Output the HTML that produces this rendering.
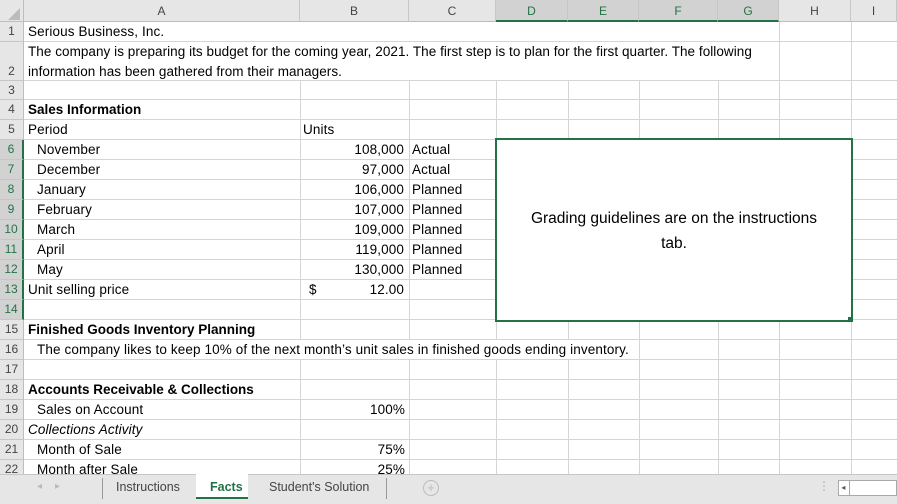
<!DOCTYPE html>
<html><head><style>
*{margin:0;padding:0;box-sizing:border-box}
body{width:897px;height:504px;overflow:hidden;background:#fff;font-family:"Liberation Sans",sans-serif;font-size:13.5px;letter-spacing:0.12px;color:#000;position:relative}
.a{position:absolute}
.h{background:#d4d4d4}
.ch{position:absolute;top:0;height:22px;line-height:22px;text-align:center;color:#444;font-size:12px;letter-spacing:0;border-right:1px solid #c6c6c6;background:#e6e6e6;border-bottom:1px solid #bdbdbd}
.ch.s{background:#d2d2d2;color:#217346;border-bottom:2px solid #217346}
.rh{position:absolute;left:0;width:24px;text-align:center;color:#444;font-size:12px;letter-spacing:0;background:#e6e6e6;border-bottom:1px solid #c6c6c6;border-right:1px solid #bdbdbd}
.rh.s{background:#d2d2d2;color:#217346;border-right:2px solid #217346}
.t{position:absolute;height:19px;line-height:19px;white-space:nowrap;background:#fff}
.r{text-align:right}
</style></head><body>
<div class="a" style="left:0;top:0;width:24px;height:22px;background:#e6e6e6;border-right:1px solid #bdbdbd;border-bottom:1px solid #bdbdbd"></div>
<div class="a" style="left:8px;top:8px;width:0;height:0;border-left:12px solid transparent;border-bottom:12px solid #bcbcbc"></div>
<div class="ch" style="left:24px;width:276px">A</div>
<div class="ch" style="left:300px;width:109px">B</div>
<div class="ch" style="left:409px;width:87px">C</div>
<div class="ch s" style="left:496px;width:72px">D</div>
<div class="ch s" style="left:568px;width:71px">E</div>
<div class="ch s" style="left:639px;width:79px">F</div>
<div class="ch s" style="left:718px;width:61px">G</div>
<div class="ch" style="left:779px;width:72px">H</div>
<div class="ch" style="left:851px;width:46px">I</div>

<div class="a h" style="left:300px;top:22px;width:1px;height:452px"></div>
<div class="a h" style="left:409px;top:22px;width:1px;height:452px"></div>
<div class="a h" style="left:496px;top:22px;width:1px;height:452px"></div>
<div class="a h" style="left:568px;top:22px;width:1px;height:452px"></div>
<div class="a h" style="left:639px;top:22px;width:1px;height:452px"></div>
<div class="a h" style="left:718px;top:22px;width:1px;height:452px"></div>
<div class="a h" style="left:779px;top:22px;width:1px;height:452px"></div>
<div class="a h" style="left:851px;top:22px;width:1px;height:452px"></div>
<div class="a h" style="left:24px;top:41px;width:873px;height:1px"></div>
<div class="a h" style="left:24px;top:80px;width:873px;height:1px"></div>
<div class="a h" style="left:24px;top:99px;width:873px;height:1px"></div>
<div class="a h" style="left:24px;top:119px;width:873px;height:1px"></div>
<div class="a h" style="left:24px;top:139px;width:873px;height:1px"></div>
<div class="a h" style="left:24px;top:159px;width:873px;height:1px"></div>
<div class="a h" style="left:24px;top:179px;width:873px;height:1px"></div>
<div class="a h" style="left:24px;top:199px;width:873px;height:1px"></div>
<div class="a h" style="left:24px;top:219px;width:873px;height:1px"></div>
<div class="a h" style="left:24px;top:239px;width:873px;height:1px"></div>
<div class="a h" style="left:24px;top:259px;width:873px;height:1px"></div>
<div class="a h" style="left:24px;top:279px;width:873px;height:1px"></div>
<div class="a h" style="left:24px;top:299px;width:873px;height:1px"></div>
<div class="a h" style="left:24px;top:319px;width:873px;height:1px"></div>
<div class="a h" style="left:24px;top:339px;width:873px;height:1px"></div>
<div class="a h" style="left:24px;top:359px;width:873px;height:1px"></div>
<div class="a h" style="left:24px;top:379px;width:873px;height:1px"></div>
<div class="a h" style="left:24px;top:399px;width:873px;height:1px"></div>
<div class="a h" style="left:24px;top:419px;width:873px;height:1px"></div>
<div class="a h" style="left:24px;top:439px;width:873px;height:1px"></div>
<div class="a h" style="left:24px;top:459px;width:873px;height:1px"></div>

<div class="rh" style="top:22px;height:20px;line-height:19px">1</div>
<div class="rh" style="top:42px;height:39px;line-height:58px">2</div>
<div class="rh" style="top:81px;height:19px;line-height:18px">3</div>
<div class="rh" style="top:100px;height:20px;line-height:19px">4</div>
<div class="rh" style="top:120px;height:20px;line-height:19px">5</div>
<div class="rh s" style="top:140px;height:20px;line-height:19px">6</div>
<div class="rh s" style="top:160px;height:20px;line-height:19px">7</div>
<div class="rh s" style="top:180px;height:20px;line-height:19px">8</div>
<div class="rh s" style="top:200px;height:20px;line-height:19px">9</div>
<div class="rh s" style="top:220px;height:20px;line-height:19px">10</div>
<div class="rh s" style="top:240px;height:20px;line-height:19px">11</div>
<div class="rh s" style="top:260px;height:20px;line-height:19px">12</div>
<div class="rh s" style="top:280px;height:20px;line-height:19px">13</div>
<div class="rh s" style="top:300px;height:20px;line-height:19px">14</div>
<div class="rh" style="top:320px;height:20px;line-height:19px">15</div>
<div class="rh" style="top:340px;height:20px;line-height:19px">16</div>
<div class="rh" style="top:360px;height:20px;line-height:19px">17</div>
<div class="rh" style="top:380px;height:20px;line-height:19px">18</div>
<div class="rh" style="top:400px;height:20px;line-height:19px">19</div>
<div class="rh" style="top:420px;height:20px;line-height:19px">20</div>
<div class="rh" style="top:440px;height:20px;line-height:19px">21</div>
<div class="rh" style="top:460px;height:20px;line-height:19px">22</div>

<div class="t" style="left:25px;top:22px;width:754px;padding-left:3px">Serious Business, Inc.</div>
<div class="t" style="left:25px;top:42px;width:754px;height:38px;padding-left:3px;line-height:20px;letter-spacing:0.05px">The company is preparing its budget for the coming year, 2021. The first step is to plan for the first quarter. The following<br>information has been gathered from their managers.</div>
<div class="t" style="left:25px;top:100px;width:275px;padding-left:3px;font-weight:bold;letter-spacing:0">Sales Information</div>
<div class="t" style="left:25px;top:120px;padding-left:3px">Period</div>
<div class="t" style="left:301px;top:120px;padding-left:2px">Units</div>
<div class="t" style="left:25px;top:140px;padding-left:12px">November</div>
<div class="t" style="left:25px;top:160px;padding-left:12px">December</div>
<div class="t" style="left:25px;top:180px;padding-left:12px">January</div>
<div class="t" style="left:25px;top:200px;padding-left:12px">February</div>
<div class="t" style="left:25px;top:220px;padding-left:12px">March</div>
<div class="t" style="left:25px;top:240px;padding-left:12px">April</div>
<div class="t" style="left:25px;top:260px;padding-left:12px">May</div>
<div class="t" style="left:25px;top:280px;padding-left:3px">Unit selling price</div>
<div class="t r" style="left:301px;top:140px;width:107px;padding-right:4px">108,000</div>
<div class="t r" style="left:301px;top:160px;width:107px;padding-right:4px">97,000</div>
<div class="t r" style="left:301px;top:180px;width:107px;padding-right:4px">106,000</div>
<div class="t r" style="left:301px;top:200px;width:107px;padding-right:4px">107,000</div>
<div class="t r" style="left:301px;top:220px;width:107px;padding-right:4px">109,000</div>
<div class="t r" style="left:301px;top:240px;width:107px;padding-right:4px">119,000</div>
<div class="t r" style="left:301px;top:260px;width:107px;padding-right:4px">130,000</div>
<div class="t" style="left:309px;top:280px">$</div>
<div class="t r" style="left:330px;top:280px;width:78px;padding-right:4px">12.00</div>
<div class="t" style="left:410px;top:140px;padding-left:2px">Actual</div>
<div class="t" style="left:410px;top:160px;padding-left:2px">Actual</div>
<div class="t" style="left:410px;top:180px;padding-left:2px">Planned</div>
<div class="t" style="left:410px;top:200px;padding-left:2px">Planned</div>
<div class="t" style="left:410px;top:220px;padding-left:2px">Planned</div>
<div class="t" style="left:410px;top:240px;padding-left:2px">Planned</div>
<div class="t" style="left:410px;top:260px;padding-left:2px">Planned</div>
<div class="t" style="left:25px;top:320px;padding-left:3px;font-weight:bold;letter-spacing:0">Finished Goods Inventory Planning</div>
<div class="t" style="left:25px;top:340px;width:614px;padding-left:12px">The company likes to keep 10% of the next month’s unit sales in finished goods ending inventory.</div>
<div class="t" style="left:25px;top:380px;padding-left:3px;font-weight:bold;letter-spacing:0">Accounts Receivable &amp; Collections</div>
<div class="t" style="left:25px;top:400px;padding-left:12px">Sales on Account</div>
<div class="t r" style="left:301px;top:400px;width:107px;padding-right:3px">100%</div>
<div class="t" style="left:25px;top:420px;padding-left:3px;font-style:italic">Collections Activity</div>
<div class="t" style="left:25px;top:440px;padding-left:12px">Month of Sale</div>
<div class="t r" style="left:301px;top:440px;width:107px;padding-right:3px">75%</div>
<div class="t" style="left:25px;top:460px;padding-left:12px">Month after Sale</div>
<div class="t r" style="left:301px;top:460px;width:107px;padding-right:3px">25%</div>

<div class="a" style="left:495px;top:138px;width:358px;height:184px;border:2px solid #217346;background:#fff;text-align:center;font-size:15.5px;letter-spacing:0;line-height:25px;padding-top:66px">Grading guidelines are on the instructions<br>tab.</div>
<div class="a" style="left:848px;top:317px;width:5px;height:5px;background:#217346"></div>

<div class="a" style="left:0;top:474px;width:897px;height:30px;background:#e6e6e6;border-top:1px solid #c6c6c6"></div>
<div class="a" style="left:37px;top:481px;color:#bbb;font-size:10px">◂</div>
<div class="a" style="left:55px;top:481px;color:#bbb;font-size:10px">▸</div>
<div class="a" style="left:102px;top:478px;width:1px;height:21px;background:#999"></div>
<div class="a" style="left:116px;top:480px;color:#444;font-size:12.5px;letter-spacing:0">Instructions</div>
<div class="a" style="left:196px;top:474px;width:52px;height:25px;background:#fff;border-bottom:2px solid #217346"></div>
<div class="a" style="left:210px;top:480px;color:#217346;font-weight:bold;font-size:12.5px;letter-spacing:0">Facts</div>
<div class="a" style="left:269px;top:480px;color:#444;font-size:12.5px;letter-spacing:0">Student's Solution</div>
<div class="a" style="left:386px;top:478px;width:1px;height:21px;background:#999"></div>
<div class="a" style="left:423px;top:480px;width:16px;height:16px;border:1px solid #bbb;border-radius:50%;color:#bbb;font-size:13px;line-height:14px;text-align:center">+</div>
<div class="a" style="left:818px;top:479px;color:#aaa;font-size:12px">⋮</div>
<div class="a" style="left:838px;top:480px;width:59px;height:16px;border:1px solid #aaa;background:#fff"></div>
<div class="a" style="left:838px;top:480px;width:12px;height:16px;border-right:1px solid #aaa;color:#555;font-size:8px;line-height:15px;text-align:center">◂</div>
</body></html>
